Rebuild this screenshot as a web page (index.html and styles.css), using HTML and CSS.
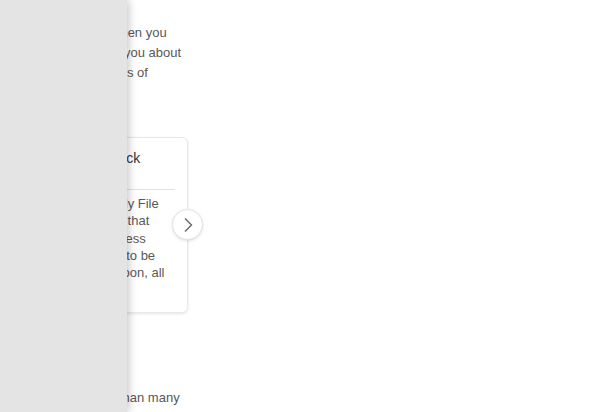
FILE: index.html
```html
<!DOCTYPE html>
<html lang="en">
<head>
<meta charset="utf-8">
<title>Cloud sync review</title>
<link rel="stylesheet" href="styles.css">
</head>
<body>
<main class="article">
  <p class="intro">It does help a lot when you<br>updates and it tells you about<br>conflicts, or the kinds of</p>

  <section class="carousel">
    <div class="track">
      <article class="card">
        <header class="card-head">
          <h3 class="card-title">Cloud Sync Check</h3>
        </header>
        <p class="card-body">It also has a handy File<br>Requests feature that<br>lets outsiders access<br>all files that need to be<br>returned to you soon, all</p>
      </article>
    </div>
    <button class="next" aria-label="Next">
      <svg width="12" height="16" viewBox="0 0 12 16"><path d="M3 1.5 L9.5 8 L3 14.5" fill="none" stroke="#666" stroke-width="1.4"/></svg>
    </button>
  </section>

  <p class="outro">It has more space than many</p>
</main>

<aside class="drawer"></aside>
</body>
</html>
```

FILE: styles.css
```css
html, body {
  margin: 0;
  padding: 0;
  background: #fff;
}

body {
  font-family: "Liberation Sans", Arial, sans-serif;
  font-size: 13px;
  color: #585858;
  width: 616px;
  height: 412px;
  overflow: hidden;
}

.article {
  padding: 23px 0 0 12px;
}

.intro {
  margin: 0;
  line-height: 20px;
  white-space: nowrap;
}

.carousel {
  position: relative;
  margin-top: 54px;
  width: 176px;
}

.track {
  display: flex;
}

.card {
  box-sizing: border-box;
  width: 176px;
  height: 176px;
  border: 1px solid #e9e9e9;
  border-radius: 6px;
  box-shadow: 0 1px 3px rgba(0, 0, 0, 0.10);
  padding: 0 12px;
  background: #fff;
}

.card-head {
  height: 52px;
  border-bottom: 1px solid #e2e2e2;
  padding-top: 11px;
  box-sizing: border-box;
}

.card-title {
  margin: 0;
  font-size: 14px;
  font-weight: normal;
  color: #333;
  line-height: 18px;
  white-space: nowrap;
}

.card-body {
  margin: 5px 0 0;
  line-height: 17.3px;
  white-space: nowrap;
}

.next {
  position: absolute;
  left: 160px;
  top: 72px;
  width: 31px;
  height: 31px;
  border-radius: 50%;
  border: 1px solid #e4e4e4;
  background: #fff;
  box-shadow: 0 1px 3px rgba(0, 0, 0, 0.12);
  padding: 0;
  display: flex;
  align-items: center;
  justify-content: center;
}

.outro {
  margin: 75px 0 0;
  line-height: 20px;
  white-space: nowrap;
}

.drawer {
  position: fixed;
  left: 0;
  top: 0;
  width: 127px;
  height: 100%;
  background: #e4e4e4;
  box-shadow: 2px 0 8px rgba(0, 0, 0, 0.22);
}
```
